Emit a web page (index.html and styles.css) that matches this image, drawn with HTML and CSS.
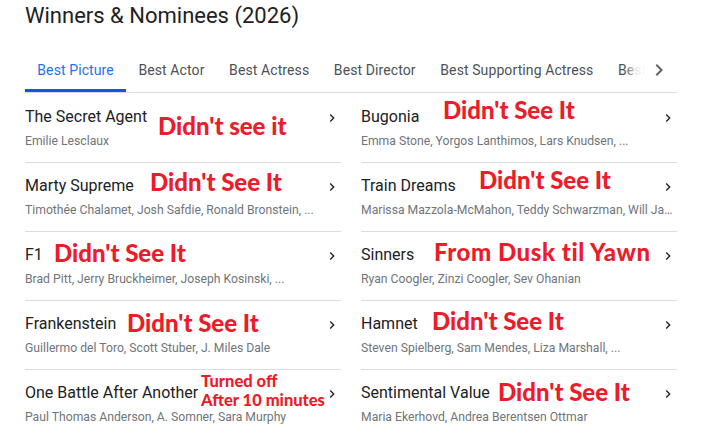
FILE: index.html
```html
<!DOCTYPE html>
<html lang="en">
<head>
<meta charset="utf-8">
<title>Winners &amp; Nominees (2026)</title>
<link rel="stylesheet" href="styles.css">
</head>
<body>
<div class="page">
  <h1 class="title">Winners &amp; Nominees (2026)</h1>
  <div class="tabbar">
    <div class="tabs">
      <div class="tab active">Best Picture</div>
      <div class="tab">Best Actor</div>
      <div class="tab">Best Actress</div>
      <div class="tab">Best Director</div>
      <div class="tab">Best Supporting Actress</div>
      <div class="tab">Best Supporting Actor</div>
    </div>
    <div class="fade"></div>
    <div class="tab-next">
      <svg viewBox="0 0 24 24" width="24" height="24"><path d="M10 6L8.59 7.41 13.17 12l-4.58 4.59L10 18l6-6z"/></svg>
    </div>
  </div>
  <div class="grid">
    <div class="card">
      <div class="head"><span class="name">The Secret Agent</span><svg class="chev" viewBox="0 0 24 24"><path d="M10 6L8.59 7.41 13.17 12l-4.58 4.59L10 18l6-6z"/></svg></div>
      <div class="sub">Emilie Lesclaux</div>
      <span class="note n-agent">Didn't see it</span>
    </div>
    <div class="card">
      <div class="head"><span class="name">Bugonia</span><svg class="chev" viewBox="0 0 24 24"><path d="M10 6L8.59 7.41 13.17 12l-4.58 4.59L10 18l6-6z"/></svg></div>
      <div class="sub">Emma Stone, Yorgos Lanthimos, Lars Knudsen, ...</div>
      <span class="note n-bugonia">Didn't See It</span>
    </div>
    <div class="card">
      <div class="head"><span class="name">Marty Supreme</span><svg class="chev" viewBox="0 0 24 24"><path d="M10 6L8.59 7.41 13.17 12l-4.58 4.59L10 18l6-6z"/></svg></div>
      <div class="sub">Timothée Chalamet, Josh Safdie, Ronald Bronstein, ...</div>
      <span class="note n-marty">Didn't See It</span>
    </div>
    <div class="card">
      <div class="head"><span class="name">Train Dreams</span><svg class="chev" viewBox="0 0 24 24"><path d="M10 6L8.59 7.41 13.17 12l-4.58 4.59L10 18l6-6z"/></svg></div>
      <div class="sub">Marissa Mazzola-McMahon, Teddy Schwarzman, Will Janowitz, ...</div>
      <span class="note n-train">Didn't See It</span>
    </div>
    <div class="card">
      <div class="head"><span class="name">F1</span><svg class="chev" viewBox="0 0 24 24"><path d="M10 6L8.59 7.41 13.17 12l-4.58 4.59L10 18l6-6z"/></svg></div>
      <div class="sub">Brad Pitt, Jerry Bruckheimer, Joseph Kosinski, ...</div>
      <span class="note n-f1">Didn't See It</span>
    </div>
    <div class="card">
      <div class="head"><span class="name">Sinners</span><svg class="chev" viewBox="0 0 24 24"><path d="M10 6L8.59 7.41 13.17 12l-4.58 4.59L10 18l6-6z"/></svg></div>
      <div class="sub">Ryan Coogler, Zinzi Coogler, Sev Ohanian</div>
      <span class="note n-sinners">From Dusk til Yawn</span>
    </div>
    <div class="card">
      <div class="head"><span class="name">Frankenstein</span><svg class="chev" viewBox="0 0 24 24"><path d="M10 6L8.59 7.41 13.17 12l-4.58 4.59L10 18l6-6z"/></svg></div>
      <div class="sub">Guillermo del Toro, Scott Stuber, J. Miles Dale</div>
      <span class="note n-frank">Didn't See It</span>
    </div>
    <div class="card">
      <div class="head"><span class="name">Hamnet</span><svg class="chev" viewBox="0 0 24 24"><path d="M10 6L8.59 7.41 13.17 12l-4.58 4.59L10 18l6-6z"/></svg></div>
      <div class="sub">Steven Spielberg, Sam Mendes, Liza Marshall, ...</div>
      <span class="note n-hamnet">Didn't See It</span>
    </div>
    <div class="card">
      <div class="head"><span class="name">One Battle After Another</span><svg class="chev" viewBox="0 0 24 24"><path d="M10 6L8.59 7.41 13.17 12l-4.58 4.59L10 18l6-6z"/></svg></div>
      <div class="sub">Paul Thomas Anderson, A. Somner, Sara Murphy</div>
      <span class="note small n-battle">Turned off<br>After 10 minutes</span>
    </div>
    <div class="card">
      <div class="head"><span class="name">Sentimental Value</span><svg class="chev" viewBox="0 0 24 24"><path d="M10 6L8.59 7.41 13.17 12l-4.58 4.59L10 18l6-6z"/></svg></div>
      <div class="sub">Maria Ekerhovd, Andrea Berentsen Ottmar</div>
      <span class="note n-senti">Didn't See It</span>
    </div>
  </div>
</div>
</body>
</html>
```
FILE: styles.css
```css
* { box-sizing: border-box; }
html, body { margin: 0; padding: 0; background: #fff; }
body { font-family: Roboto, "Liberation Sans", Arial, sans-serif; color: #202124; }

.page { width: 703px; padding-left: 25px; padding-right: 26px; }

.title {
  margin: 2px 0 0 0;
  font-size: 22px;
  line-height: 28px;
  font-weight: 400;
  color: #202124;
}

.tabbar {
  position: relative;
  margin-top: 16px;
  border-bottom: 1px solid #dadce0;
  overflow: hidden;
}
.tabs { display: flex; white-space: nowrap; }
.tab {
  flex: none;
  padding: 14px 12.3px 9px;
  font-size: 14px;
  line-height: 20px;
  letter-spacing: 0.1px;
  color: #4d5156;
  border-bottom: 3px solid transparent;
}
.tab.active { color: #1a73e8; border-bottom-color: #1558d6; }
.fade {
  position: absolute;
  top: 0; right: 0; bottom: 0;
  width: 52px;
  background: linear-gradient(to right, rgba(255,255,255,0) 0%, rgba(255,255,255,0.85) 22%, #fff 40%);
}
.tab-next {
  position: absolute;
  top: 12px; right: 6px;
  width: 24px; height: 24px;
  display: flex;
}
.tab-next svg { fill: #5f6368; }

.grid {
  margin-top: 1px;
  display: grid;
  grid-template-columns: 1fr 1fr;
  column-gap: 20px;
}
.card {
  position: relative;
  padding: 11px 0 13px;
  border-bottom: 1px solid #dadce0;
  min-width: 0;
}
.card:nth-last-child(-n+2) { border-bottom: none; }
.head { display: flex; align-items: center; justify-content: space-between; }
.name { font-size: 16px; line-height: 24px; color: #202124; }
.chev { width: 16px; height: 16px; margin-right: 1px; margin-top: 2px; fill: #202124; flex: none; }
.sub {
  margin-top: 4px;
  font-size: 12.2px;
  line-height: 16px;
  color: #70757a;
  white-space: nowrap;
  overflow: hidden;
  text-overflow: ellipsis;
  padding-right: 4px;
}

.note {
  position: absolute;
  font-family: Lato, "DejaVu Sans", sans-serif;
  font-weight: 900;
  font-size: 24px;
  line-height: 1;
  color: #ec1c2a;
  white-space: nowrap;
}
.note.small { font-size: 16.5px; line-height: 18.6px; }
.n-agent { left: 133px; top: 20px; }
.n-marty { left: 125px; top: 7px; }
.n-f1 { left: 29px; top: 9px; }
.n-frank { left: 102px; top: 10px; }
.n-battle { left: 176px; top: 2px; }
.n-bugonia { left: 82px; top: 4px; }
.n-train { left: 118px; top: 5px; }
.n-sinners { left: 73px; top: 8px; letter-spacing: 0.55px; }
.n-hamnet { left: 71px; top: 8px; }
.n-senti { left: 137px; top: 10px; }
```
